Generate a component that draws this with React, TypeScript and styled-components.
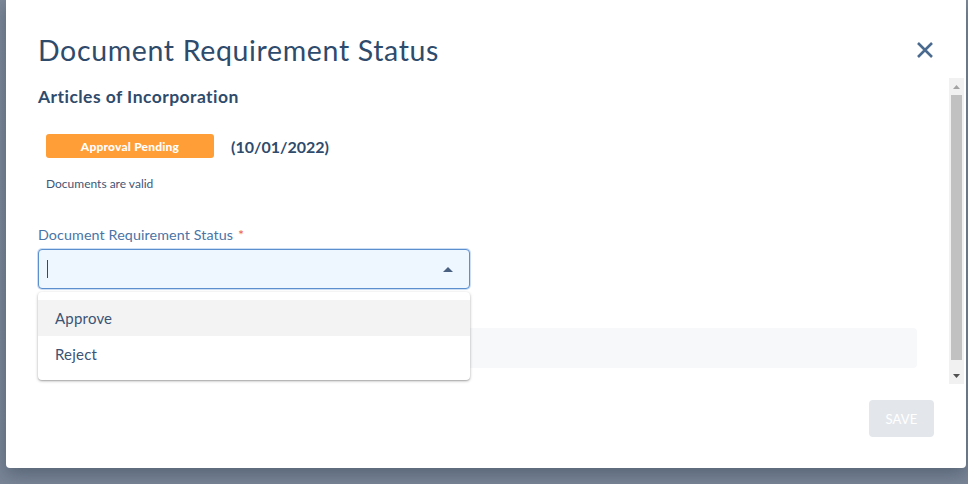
import React from "react";
import styled, { createGlobalStyle } from "styled-components";

const Global = createGlobalStyle`
  html, body { margin: 0; padding: 0; }
  body {
    background: #7c8898;
    font-family: Lato, "Noto Sans", sans-serif;
    width: 968px;
    height: 484px;
    overflow: hidden;
  }
`;

const Backdrop = styled.div`
  width: 968px;
  height: 484px;
  background: linear-gradient(180deg, #7d8999 0%, #7a8697 100%);
  display: flex;
  align-items: flex-start;
  padding-left: 6px;
  box-sizing: border-box;
`;

const Modal = styled.div`
  width: 960px;
  height: 468px;
  background: #fff;
  border-radius: 0 0 4px 4px;
  box-shadow: 0 6px 18px rgba(40, 55, 75, 0.45);
  display: flex;
  flex-direction: column;
`;

const Header = styled.div`
  display: flex;
  align-items: flex-start;
  justify-content: space-between;
  padding: 33px 32px 0 32px;
  height: 45px;
`;

const Title = styled.h1`
  margin: 0;
  font-family: Lato, sans-serif;
  font-weight: 400;
  font-size: 28.5px;
  line-height: 34px;
  color: #2f4b6c;
  letter-spacing: 0.65px;
`;

const CloseBtn = styled.button`
  border: none;
  background: none;
  padding: 0;
  margin-top: 8px;
  width: 18px;
  height: 18px;
  cursor: pointer;
  display: flex;
`;

const Body = styled.div`
  height: 306px;
  display: flex;
  margin-right: 2px;
`;

const Content = styled.div`
  flex: 1;
  padding: 0 32px;
  position: relative;
`;

const ScrollTrack = styled.div`
  width: 15px;
  background: #f1f1f1;
  display: flex;
  flex-direction: column;
`;

const ScrollArrow = styled.div`
  height: 17px;
  display: flex;
  align-items: center;
  justify-content: center;
`;

const ScrollThumb = styled.div`
  height: 265px;
  margin: 0 2px;
  background: #c1c1c1;
`;

const ScrollSpacer = styled.div`
  flex: 1;
`;

const Heading = styled.h2`
  margin: 0;
  padding-top: 9px;
  font-size: 17.5px;
  line-height: 20px;
  font-weight: 700;
  color: #2f4b6c;
  letter-spacing: 0.45px;
`;

const StatusRow = styled.div`
  display: flex;
  align-items: center;
  gap: 17px;
  margin-top: 27px;
  padding-left: 8px;
`;

const Badge = styled.span`
  display: inline-flex;
  align-items: center;
  justify-content: center;
  width: 168px;
  height: 24px;
  border-radius: 3px;
  background: #ff9e36;
  color: #fff;
  font-size: 12px;
  font-weight: 900;
  letter-spacing: 0.2px;
`;

const DateText = styled.span`
  font-size: 16px;
  font-weight: 700;
  color: #2f4b6c;
`;

const Note = styled.div`
  margin-top: 18px;
  padding-left: 8px;
  font-size: 12px;
  color: #3f5676;
`;

const Field = styled.div`
  margin-top: 35px;
  position: relative;
  width: 432px;
`;

const Label = styled.label`
  display: block;
  font-size: 14.3px;
  line-height: 18px;
  color: #4a74a6;
  letter-spacing: 0.1px;
`;

const Req = styled.span`
  color: #e8585a;
  margin-left: 5px;
`;

const InputBox = styled.div`
  margin-top: 5px;
  height: 40px;
  box-sizing: border-box;
  border: 1px solid #5b8fcd;
  border-radius: 4px;
  background: #eef6ff;
  box-shadow: 0 0 0 1px rgba(110, 160, 220, 0.35);
  display: flex;
  align-items: center;
  justify-content: space-between;
  padding: 0 16px 0 8px;
`;

const Caret = styled.span`
  width: 1px;
  height: 18px;
  background: #2f4b6c;
`;

const Menu = styled.ul`
  position: absolute;
  left: 0;
  right: 0;
  top: 66px;
  margin: 0;
  padding: 8px 0;
  list-style: none;
  background: #fff;
  border-radius: 4px;
  box-shadow: 0 1px 3px rgba(0, 0, 0, 0.32), 0 1px 1px rgba(0, 0, 0, 0.1);
  z-index: 3;
`;

const Option = styled.li<{ $active?: boolean }>`
  height: 36px;
  display: flex;
  align-items: center;
  padding-left: 17px;
  font-size: 15px;
  color: #3c5374;
  letter-spacing: 0.2px;
  background: ${(p) => (p.$active ? "#f3f3f3" : "transparent")};
`;

const HiddenLabel = styled.div`
  margin-top: 17px;
  font-size: 14px;
  color: #4a74a6;
  height: 18px;
`;

const GrayBox = styled.div`
  margin-top: 4px;
  height: 40px;
  border-radius: 4px;
  background: #f7f8fa;
`;

const Footer = styled.div`
  flex: 1;
  display: flex;
  justify-content: flex-end;
  align-items: flex-start;
  padding: 16px 32px 0 0;
`;

const SaveBtn = styled.button`
  width: 65px;
  height: 37px;
  border: none;
  border-radius: 4px;
  background: #e3e7ec;
  color: #fff;
  font-family: Lato, sans-serif;
  font-size: 13px;
  font-weight: 400;
  letter-spacing: 0.2px;
`;

export default function App() {
  return (
    <>
      <Global />
      <Backdrop>
        <Modal>
          <Header>
            <Title>Document Requirement Status</Title>
            <CloseBtn aria-label="close">
              <svg width="18" height="18" viewBox="0 0 18 18">
                <path d="M2 2 L16 16 M16 2 L2 16" stroke="#4a6a8f" strokeWidth="2.6" strokeLinecap="butt" />
              </svg>
            </CloseBtn>
          </Header>
          <Body>
            <Content>
              <Heading>Articles of Incorporation</Heading>
              <StatusRow>
                <Badge>Approval Pending</Badge>
                <DateText>(10/01/2022)</DateText>
              </StatusRow>
              <Note>Documents are valid</Note>
              <Field>
                <Label>
                  Document Requirement Status<Req>*</Req>
                </Label>
                <InputBox>
                  <Caret />
                  <svg width="10" height="5" viewBox="0 0 10 5">
                    <path d="M0 5 L5 0 L10 5 Z" fill="#4a6080" />
                  </svg>
                </InputBox>
                <Menu>
                  <Option $active>Approve</Option>
                  <Option>Reject</Option>
                </Menu>
              </Field>
              <HiddenLabel>Comments</HiddenLabel>
              <GrayBox />
            </Content>
            <ScrollTrack>
              <ScrollArrow>
                <svg width="7" height="4" viewBox="0 0 7 4">
                  <path d="M0 4 L3.5 0 L7 4 Z" fill="#a3a3a3" />
                </svg>
              </ScrollArrow>
              <ScrollThumb />
              <ScrollSpacer />
              <ScrollArrow>
                <svg width="7" height="4" viewBox="0 0 7 4">
                  <path d="M0 0 L3.5 4 L7 0 Z" fill="#505050" />
                </svg>
              </ScrollArrow>
            </ScrollTrack>
          </Body>
          <Footer>
            <SaveBtn>SAVE</SaveBtn>
          </Footer>
        </Modal>
      </Backdrop>
    </>
  );
}
